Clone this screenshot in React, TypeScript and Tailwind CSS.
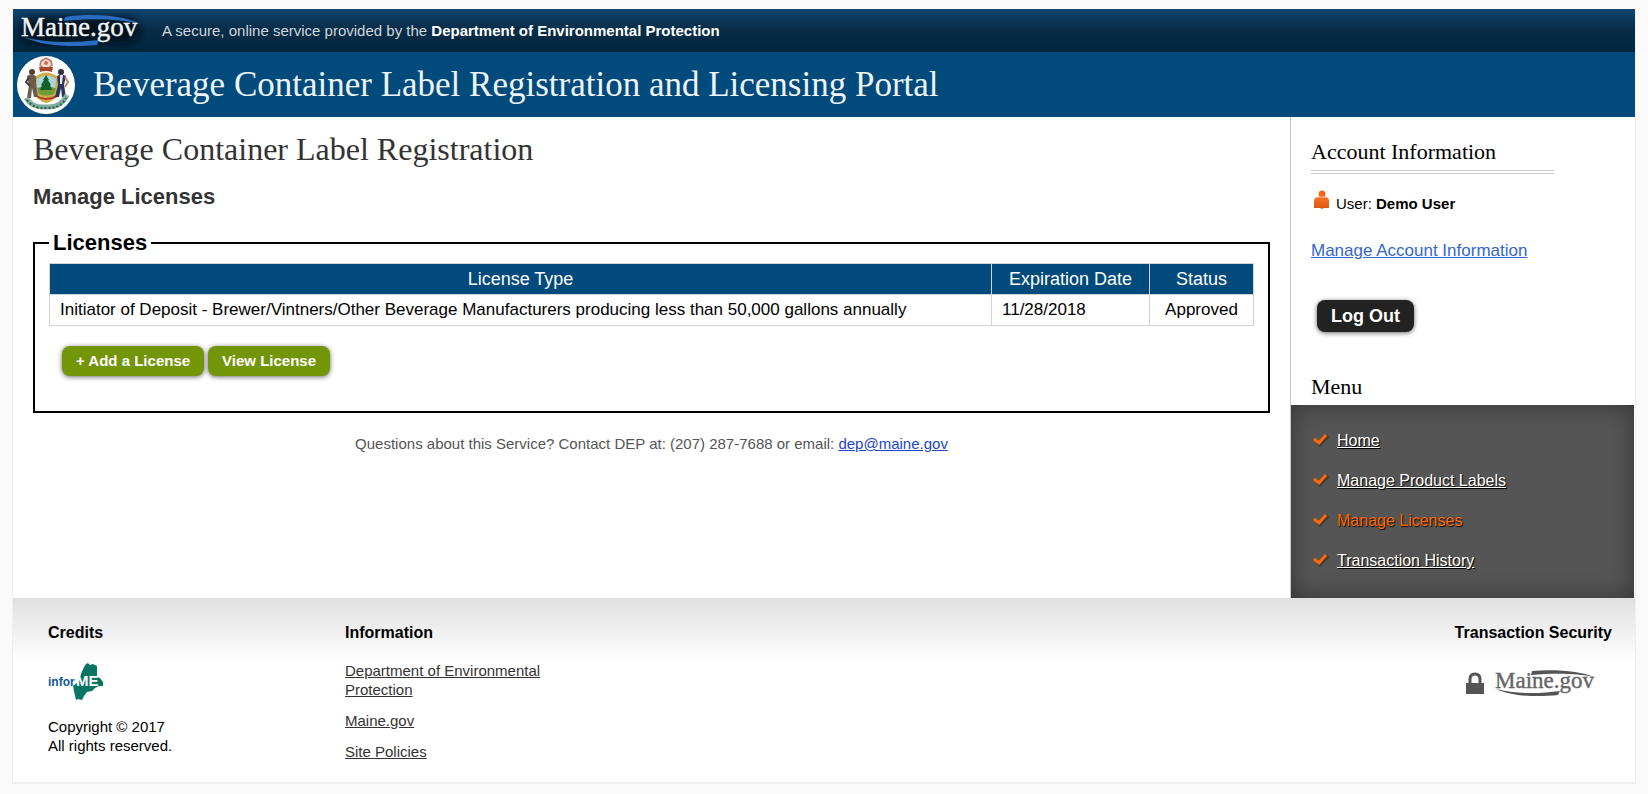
import React from "react";

type LinkProps = {
  label: string;
  active?: boolean;
};

const menuLinks: LinkProps[] = [
  { label: "Home" },
  { label: "Manage Product Labels" },
  { label: "Manage Licenses", active: true },
  { label: "Transaction History" },
];

const infoLinks = [
  "Department of Environmental Protection",
  "Maine.gov",
  "Site Policies",
];

const licenses = [
  {
    type: "Initiator of Deposit - Brewer/Vintners/Other Beverage Manufacturers producing less than 50,000 gallons annually",
    expires: "11/28/2018",
    status: "Approved",
  },
];

const MaineLogo: React.FC = () => (
  <svg width="132" height="43" viewBox="0 0 132 43" aria-label="Maine.gov">
    <defs>
      <filter id="logoGlow" x="-20%" y="-40%" width="140%" height="180%">
        <feGaussianBlur stdDeviation="4" />
      </filter>
    </defs>
    <rect x="8" y="9" width="118" height="25" rx="12" fill="#000814" opacity="0.85" filter="url(#logoGlow)" />
    <path d="M52 8 C78 4 110 6 127 15 C108 10 78 9 51 12 Z" fill="#2a6cc0" />
    <path d="M11 28 C30 38 62 38 84 36 L86 31 C60 34 32 34 11 28 Z" fill="#2a6cc0" />
    <text
      x="8"
      y="27"
      fontSize="27"
      fill="#f2f5f8"
      stroke="#f2f5f8"
      strokeWidth="0.4"
      fontFamily="Liberation Serif, serif"
    >
      Maine.gov
    </text>
  </svg>
);

const MaineLogoGray: React.FC = () => (
  <svg width="100" height="28" viewBox="0 0 100 28" className="overflow-visible" aria-label="Maine.gov">
    <path d="M37 2 C60 0 86 2 99 8 C82 4 58 4 36 6 Z" fill="#555" />
    <path d="M1 20 C18 28 44 28 63 26 L65 22 C44 25 20 25 1 20 Z" fill="#555" />
    <text
      x="0"
      y="19"
      fontSize="23"
      fill="#666"
      stroke="#666"
      strokeWidth="0.4"
      fontFamily="Liberation Serif, serif"
    >
      Maine.gov
    </text>
  </svg>
);

const StateSeal: React.FC = () => (
  <svg width="60" height="60" viewBox="0 0 60 60" aria-label="Maine state seal">
    <circle cx="29" cy="30" r="29" fill="#fff" />
    <path d="M29 3 L34 6 L35 10 L32 13 H26 L23 10 L24 6 Z" fill="#f3d9cf" stroke="#b5796a" strokeWidth="1.5" />
    <circle cx="29" cy="8" r="2" fill="#c9705c" />
    <path d="M22 12 H36 L35 17 Q29 15 23 17 Z" fill="#a8452f" />
    <path d="M18 22 Q29 13 41 22 L42 36 Q39 46 29 48 Q20 46 17 36 Z" fill="#cfae4a" />
    <path d="M20 24 Q29 17 39 24 L38 36 Q29 42 20 36 Z" fill="#a9d6df" />
    <path d="M20 33 Q29 30 39 33 L37 39 Q29 42 22 39 Z" fill="#6f9a35" />
    <path d="M29 20 L32 25 L31 25 L34 30 L33 30 L35 35 H23 L25 30 L24 30 L27 25 L26 25 Z" fill="#175f2c" />
    <path d="M19 41 Q29 47 40 41" stroke="#b33e22" strokeWidth="2" fill="none" />
    <circle cx="15" cy="17" r="3" fill="#5b4130" />
    <path d="M10 21 L14 19 L19 21 L19 29 L21 42 H17 L15 33 L14 43 H10 L12 30 Z" fill="#6d5b50" />
    <path d="M12 22 L9 27 L13 31" stroke="#4f3b2f" strokeWidth="2" fill="none" />
    <circle cx="44" cy="17" r="3" fill="#2f2f38" />
    <path d="M40 21 L44 19 L49 21 L47 30 L49 42 H45 L44 33 L42 42 H38 L41 30 Z" fill="#2c3460" />
    <path d="M43 20 H46 L45 29 H43 Z" fill="#e8e3dd" />
    <path d="M48 22 L51 27 L48 32" stroke="#b58a6a" strokeWidth="2" fill="none" />
    <path d="M9 43 Q15 53 29 52 Q44 53 50 40" stroke="#7fae9f" strokeWidth="5" fill="none" />
    <path d="M10 45 Q17 54 29 53 Q43 54 49 43" stroke="#35594f" strokeWidth="2" strokeDasharray="2 2" fill="none" />
  </svg>
);

const InformeLogo: React.FC = () => (
  <svg width="56" height="38" viewBox="0 0 56 38" aria-label="InforME">
    <path
      d="M36 4 L38 1 L40 0 L42 2 L45 1 L49 3 L49 14 L52 15 L55 19 L55 23 L51 23 L47 25 L44 28 L39 29 L36 33 L34 37 L30 36 L28 37 L26 28 L25 23 L31 18 L33 11 Z"
      fill="#067562"
    />
    <text x="0" y="23" fontSize="12" fontWeight="bold" fill="#0f5796" fontFamily="Liberation Sans, sans-serif">
      infor
    </text>
    <text x="28" y="23" fontSize="15" fontWeight="bold" fill="#fff" fontFamily="Liberation Sans, sans-serif">
      ME
    </text>
  </svg>
);

const UserIcon: React.FC = () => (
  <svg width="16" height="24" viewBox="0 0 16 24" aria-hidden="true">
    <defs>
      <linearGradient id="userFill" x1="0" y1="0" x2="0" y2="1">
        <stop offset="0" stopColor="#f9752b" />
        <stop offset="1" stopColor="#d9560f" />
      </linearGradient>
    </defs>
    <circle cx="8" cy="4" r="3.5" fill="#f4691e" />
    <path d="M0 10 Q0 8 3 7 H12 Q15 8 15 10 V18 H10 L8 19 L6 18 H0 Z" fill="url(#userFill)" />
    <path d="M3 7 H12" stroke="#fff" strokeOpacity="0.5" strokeWidth="1" />
  </svg>
);

const CheckIcon: React.FC = () => (
  <svg width="16" height="16" viewBox="0 0 16 16" aria-hidden="true">
    <path d="M3 8 L7 12 L15 3" stroke="#222" strokeOpacity="0.5" strokeWidth="3" fill="none" />
    <path d="M1 6 L6 10 L13 2" stroke="#ff6a00" strokeWidth="3" fill="none" />
  </svg>
);

const LockIcon: React.FC = () => (
  <svg width="18" height="22" viewBox="0 0 18 22" aria-hidden="true">
    <path d="M4 11 V7 Q4 2 9 2 Q14 2 14 7 V11" stroke="#555" strokeWidth="3" fill="none" />
    <rect x="0" y="11" width="18" height="11" fill="#555" />
  </svg>
);

const Header: React.FC = () => {
  return (
    <header>
      <div className="flex h-[43px] items-center bg-linear-to-b from-[#10456d] via-[#072c47] to-[#02263e]">
        <MaineLogo />
        <p className="ml-[17px] pt-[2px] text-[15px] text-gray-300">
          A secure, online service provided by the{" "}
          <strong className="text-white">
            Department of Environmental Protection
          </strong>
        </p>
      </div>
      <div className="flex h-[65px] items-center gap-4 bg-[#004a7c] pl-1">
        <StateSeal />
        <p className="pt-[2px] font-['Liberation_Serif',serif] text-[35px] text-[#eef4f9]">
          Beverage Container Label Registration and Licensing Portal
        </p>
      </div>
    </header>
  );
};

const LicenseTable: React.FC = () => {
  return (
    <table className="w-full border-collapse text-[17px] leading-5">
      <thead>
        <tr className="bg-[#004a7c] text-lg leading-5 text-white">
          <th className="border border-[#d3d3d3] px-[10px] py-[5px] font-normal">License Type</th>
          <th className="w-[158px] border border-[#d3d3d3] px-[10px] py-[5px] font-normal">Expiration Date</th>
          <th className="w-[104px] border border-[#d3d3d3] px-[10px] py-[5px] font-normal">Status</th>
        </tr>
      </thead>
      <tbody>
        {licenses.map((item, index) => (
          <tr key={index}>
            <td className="border border-[#d3d3d3] px-[10px] py-[5px]">{item.type}</td>
            <td className="border border-[#d3d3d3] px-[10px] py-[5px]">{item.expires}</td>
            <td className="border border-[#d3d3d3] px-[10px] py-[5px] text-center">{item.status}</td>
          </tr>
        ))}
      </tbody>
    </table>
  );
};

const Sidebar: React.FC = () => {
  return (
    <aside className="flex w-[345px] shrink-0 flex-col border-l border-[#c8c8c8]">
      <div className="px-5 pt-[21px]">
        <h2 className="mr-[61px] border-b-4 border-double border-[#c8c8c8] pb-1 font-['Liberation_Serif',serif] text-[22px] leading-7">
          Account Information
        </h2>
        <p className="mt-4 flex items-end gap-[6px] pl-[3px] text-[15px] leading-5">
          <UserIcon />
          <span>
            User: <strong>Demo User</strong>
          </span>
        </p>
        <a href="#" className="mt-[27px] block text-[17px] leading-5 text-[#3366cc] underline">
          Manage Account Information
        </a>
        <button
          type="button"
          className="mt-[39px] ml-[6px] block rounded-lg bg-[#222] px-[14px] py-1 text-lg leading-6 font-bold text-white shadow-[0_1px_5px_rgba(0,0,0,0.6)]"
        >
          Log Out
        </button>
        <h2 className="mt-[41px] mb-1 font-['Liberation_Serif',serif] text-[22px] leading-7">Menu</h2>
      </div>
      <nav className="mr-px grow bg-[#555] shadow-[inset_0_0_25px_rgba(0,0,0,0.4)]">
        <ul className="flex flex-col gap-5 px-[22px] pt-[26px] pb-[27px]">
          {menuLinks.map((item) => (
            <li key={item.label} className="flex items-center gap-2 text-base leading-5">
              <CheckIcon />
              <a
                href="#"
                className={
                  item.active
                    ? "text-[#ff6a00] [text-shadow:1px_1px_1px_#000]"
                    : "text-white underline [text-shadow:1px_1px_1px_#000]"
                }
              >
                {item.label}
              </a>
            </li>
          ))}
        </ul>
      </nav>
    </aside>
  );
};

const Footer: React.FC = () => {
  return (
    <footer className="flex bg-linear-to-b from-[#e0e0e0] to-white to-[64px] px-[35px] pt-[25px] text-[15px] leading-[19px]">
      <div className="w-[297px] shrink-0">
        <h3 className="text-base leading-5 font-bold">Credits</h3>
        <a href="#" className="mt-5 block w-14">
          <InformeLogo />
        </a>
        <p className="mt-4">
          Copyright © 2017
          <br />
          All rights reserved.
        </p>
      </div>
      <div className="w-[205px] pb-[21px]">
        <h3 className="text-base leading-5 font-bold">Information</h3>
        <ul className="mt-[18px] flex flex-col gap-3 text-[#333]">
          {infoLinks.map((label) => (
            <li key={label}>
              <a href="#" className="underline">
                {label}
              </a>
            </li>
          ))}
        </ul>
      </div>
      <div className="-mr-3 ml-auto">
        <h3 className="text-base leading-5 font-bold">Transaction Security</h3>
        <div className="mt-[26px] flex items-center gap-[11px] pl-[11px]">
          <LockIcon />
          <MaineLogoGray />
        </div>
      </div>
    </footer>
  );
};

const App: React.FC = () => {
  return (
    <div className="min-h-screen bg-[#fafafa] px-3 pt-[9px] pb-[9px] font-['Liberation_Sans',Arial,sans-serif] text-black">
      <div className="border-x border-b-2 border-[#eee] bg-white">
        <Header />
        <div className="flex">
          <main className="min-w-0 grow px-5 pt-4">
            <h1 className="font-['Liberation_Serif',serif] text-[32px] leading-8 text-[#333]">
              Beverage Container Label Registration
            </h1>
            <h2 className="mt-5 text-[22px] leading-6 font-bold text-[#333]">Manage Licenses</h2>
            <fieldset className="mt-[22px] border-2 border-black px-[14px] pb-[35px]">
              <legend className="px-1 text-[22px] leading-6 font-bold">Licenses</legend>
              <div className="pt-2">
                <LicenseTable />
              </div>
              <div className="mt-5 ml-[13px] flex gap-1">
                {["+ Add a License", "View License"].map((label) => (
                  <button
                    key={label}
                    type="button"
                    className="rounded-lg bg-[#739608] px-[14px] py-[5px] text-[15px] leading-5 font-bold text-white shadow-[0_1px_5px_rgba(0,0,0,0.6)]"
                  >
                    {label}
                  </button>
                ))}
              </div>
            </fieldset>
            <p className="mt-[21px] text-center text-[15px] leading-5 text-[#555]">
              Questions about this Service? Contact DEP at: (207) 287-7688 or email:{" "}
              <a href="#" className="text-[#2244cc] underline">
                dep@maine.gov
              </a>
            </p>
          </main>
          <Sidebar />
        </div>
        <Footer />
      </div>
    </div>
  );
};

export default App;
